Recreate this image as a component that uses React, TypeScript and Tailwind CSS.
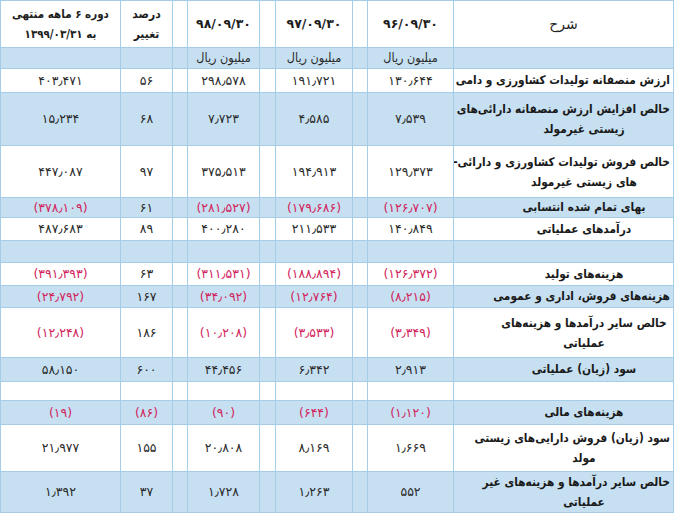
import React from "react";

type Row = {
  h: number;
  blue: boolean;
  desc?: string[];
  v?: [string, string, string, string, string]; // 96, 97, 98, pct, period
  red?: [boolean, boolean, boolean, boolean, boolean];
};

const R = [true, true, true, false, true] as [boolean, boolean, boolean, boolean, boolean];
const N = [false, false, false, false, false] as [boolean, boolean, boolean, boolean, boolean];

const rows: Row[] = [
  { h: 24, blue: false, desc: ["ارزش منصفانه تولیدات کشاورزی و دامی"], v: ["۱۳۰٫۶۴۴", "۱۹۱٫۷۲۱", "۲۹۸٫۵۷۸", "۵۶", "۴۰۳٫۴۷۱"], red: N },
  { h: 53, blue: true, desc: ["خالص افزایش ارزش منصفانه دارائی‌های", "زیستی غیرمولد"], v: ["۷٫۵۳۹", "۴٫۵۸۵", "۷٫۷۲۳", "۶۸", "۱۵٫۲۳۴"], red: N },
  { h: 52, blue: false, desc: ["خالص فروش تولیدات کشاورزی و دارائی-", "های زیستی غیرمولد"], v: ["۱۲۹٫۳۷۳", "۱۹۴٫۹۱۳", "۳۷۵٫۵۱۳", "۹۷", "۴۴۷٫۰۸۷"], red: N },
  { h: 20, blue: true, desc: ["بهای تمام شده انتسابی"], v: ["(۱۲۶٫۷۰۷)", "(۱۷۹٫۶۸۶)", "(۲۸۱٫۵۲۷)", "۶۱", "(۳۷۸٫۱۰۹)"], red: R },
  { h: 23, blue: false, desc: ["درآمدهای عملیاتی"], v: ["۱۴۰٫۸۴۹", "۲۱۱٫۵۳۳", "۴۰۰٫۲۸۰", "۸۹", "۴۸۷٫۶۸۳"], red: N },
  { h: 22, blue: true },
  { h: 23, blue: false, desc: ["هزینه‌های تولید"], v: ["(۱۲۶٫۳۷۲)", "(۱۸۸٫۸۹۴)", "(۳۱۱٫۵۳۱)", "۶۳", "(۳۹۱٫۳۹۳)"], red: R },
  { h: 22, blue: true, desc: ["هزینه‌های فروش، اداری و عمومی"], v: ["(۸٫۲۱۵)", "(۱۲٫۷۶۴)", "(۳۴٫۰۹۲)", "۱۶۷", "(۲۴٫۷۹۲)"], red: R },
  { h: 50, blue: false, desc: ["خالص سایر درآمدها و هزینه‌های", "عملیاتی"], v: ["(۳٫۳۴۹)", "(۳٫۵۳۳)", "(۱۰٫۲۰۸)", "۱۸۶", "(۱۲٫۲۴۸)"], red: R },
  { h: 24, blue: true, desc: ["سود (زیان) عملیاتی"], v: ["۲٫۹۱۳", "۶٫۳۴۲", "۴۴٫۴۵۶", "۶۰۰", "۵۸٫۱۵۰"], red: N },
  { h: 19, blue: false },
  { h: 24, blue: true, desc: ["هزینه‌های مالی"], v: ["(۱٫۱۲۰)", "(۶۴۴)", "(۹۰)", "(۸۶)", "(۱۹)"], red: [true, true, true, true, true] },
  { h: 47, blue: false, desc: ["سود (زیان) فروش دارایی‌های زیستی", "مولد"], v: ["۱٫۶۶۹", "۸٫۱۶۹", "۲۰٫۸۰۸", "۱۵۵", "۲۱٫۹۷۷"], red: N },
  { h: 41, blue: true, desc: ["خالص سایر درآمدها و هزینه‌های غیر", "عملیاتی"], v: ["۵۵۲", "۱٫۲۶۳", "۱٫۷۲۸", "۳۷", "۱٫۳۹۲"], red: N },
];

const cellB = "border border-[#a6cde8] p-0 overflow-hidden text-[10px] leading-[10px]";
const COND = { fontFamily: '"DejaVu Sans Condensed", "DejaVu Sans", sans-serif', fontStretch: "condensed" } as React.CSSProperties;

function Num({ t, red }: { t?: string; red?: boolean }) {
  return (
    <td className={`${cellB} text-center align-middle`}>
      {t ? (
        <div
          dir="ltr"
          className={`text-[12.5px] leading-[14px] tracking-[0.8px] ${red ? "text-[#d2245c]" : "text-[#2a2a2a]"}`}
        >
          {t}
        </div>
      ) : null}
    </td>
  );
}

function Empty() {
  return <td className={cellB}></td>;
}

function Unit() {
  return (
    <td className={`${cellB} text-center`}>
      <div className="text-[12.5px] leading-[16px] text-[#2a2a2a]" style={COND}>
        میلیون ریال
      </div>
    </td>
  );
}

function DateH({ t }: { t: string }) {
  return (
    <td className={`${cellB} text-center`}>
      <div dir="ltr" className="text-[12.5px] leading-[16px] font-bold text-[#1e1e1e]">
        {t}
      </div>
    </td>
  );
}

export default function App() {
  return (
    <div className="w-[678px] h-[523px] bg-white overflow-hidden" style={{ fontFamily: '"DejaVu Sans", sans-serif' }}>
      <table dir="rtl" className="table-fixed border-collapse w-[673px]">
        <colgroup>
          <col className="w-[220px]" />
          <col className="w-[86px]" />
          <col className="w-[15px]" />
          <col className="w-[77px]" />
          <col className="w-[16px]" />
          <col className="w-[72px]" />
          <col className="w-[15px]" />
          <col className="w-[52px]" />
          <col className="w-[120px]" />
        </colgroup>
        <tbody>
          <tr className="h-[47px] bg-white">
            <td className={`${cellB} text-center`}>
              <div className="text-[14px] leading-[18px] text-[#1e1e1e]">شرح</div>
            </td>
            <DateH t="۹۶/۰۹/۳۰" />
            <Empty />
            <DateH t="۹۷/۰۹/۳۰" />
            <Empty />
            <DateH t="۹۸/۰۹/۳۰" />
            <Empty />
            <td className={`${cellB} text-center`}>
              <div className="text-[12px] font-bold leading-[20px] text-[#1e1e1e]" style={COND}>
                درصد
                <br />
                تغییر
              </div>
            </td>
            <td className={`${cellB} text-center`}>
              <div className="text-[11.5px] font-bold leading-[20px] text-[#1e1e1e]" style={COND}>
                دوره ۶ ماهه منتهی
                <br />
                به ۱۳۹۹/۰۳/۳۱
              </div>
            </td>
          </tr>
          <tr className="h-[21px] bg-[#c6e0f2]">
            <Empty />
            <Unit />
            <Empty />
            <Unit />
            <Empty />
            <Unit />
            <Empty />
            <Empty />
            <Empty />
          </tr>
          {rows.map((r, i) => (
            <tr key={i} className={r.blue ? "bg-[#c6e0f2]" : "bg-white"} style={{ height: r.h }}>
              <td className={`${cellB} align-middle`}>
                {r.desc ? (
                  <div
                    className={`text-center whitespace-nowrap pl-[44px] pr-[3px] text-[11.8px] font-bold text-[#1a1a1a] ${
                      r.desc.length > 1 ? "leading-[20px]" : "leading-[17px]"
                    }`}
                    style={COND}
                  >
                    {r.desc.map((l, j) => (
                      <div key={j}>{l}</div>
                    ))}
                  </div>
                ) : null}
              </td>
              <Num t={r.v?.[0]} red={r.red?.[0]} />
              <Empty />
              <Num t={r.v?.[1]} red={r.red?.[1]} />
              <Empty />
              <Num t={r.v?.[2]} red={r.red?.[2]} />
              <Empty />
              <Num t={r.v?.[3]} red={r.red?.[3]} />
              <Num t={r.v?.[4]} red={r.red?.[4]} />
            </tr>
          ))}
        </tbody>
      </table>
    </div>
  );
}
